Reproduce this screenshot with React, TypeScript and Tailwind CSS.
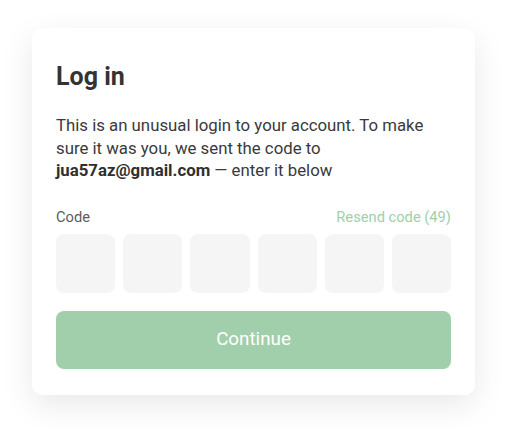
export default function App() {
  const cells = [0, 1, 2, 3, 4, 5];

  return (
    <div
      className="w-[508px] h-[435px] bg-white pt-[28px] pl-[32px]"
      style={{ fontFamily: "Roboto, 'Noto Sans', sans-serif" }}
    >
      <div className="w-[443px] h-[367px] bg-white rounded-[10px] shadow-[0_10px_32px_rgba(0,0,0,0.09)] px-6 pt-[33px]">
        <h1 className="text-[25px] leading-[32px] font-bold text-[#333333]">Log in</h1>

        <p className="mt-[21px] text-[16.8px] leading-[22.5px] text-[#3a3a3a]">
          This is an unusual login to your account. To make sure it was you, we sent the code to{" "}
          <span className="font-bold text-[#2f2f2f]">jua57az@gmail.com</span> — enter it below
        </p>

        <div className="mt-[25px] flex items-center justify-between text-[14.7px] leading-[20px]">
          <span className="text-[#5c5c5c]">Code</span>
          <span className="text-[#9fcfab]">Resend code (49)</span>
        </div>

        <div className="mt-[7px] flex gap-2">
          {cells.map((c) => (
            <div key={c} className="flex-1 h-[59px] rounded-[8px] bg-[#f5f5f5]" />
          ))}
        </div>

        <button className="mt-[18px] w-full h-[58px] rounded-[8px] bg-[#a1cfab] text-white text-[18.8px]">
          Continue
        </button>
      </div>
    </div>
  );
}
